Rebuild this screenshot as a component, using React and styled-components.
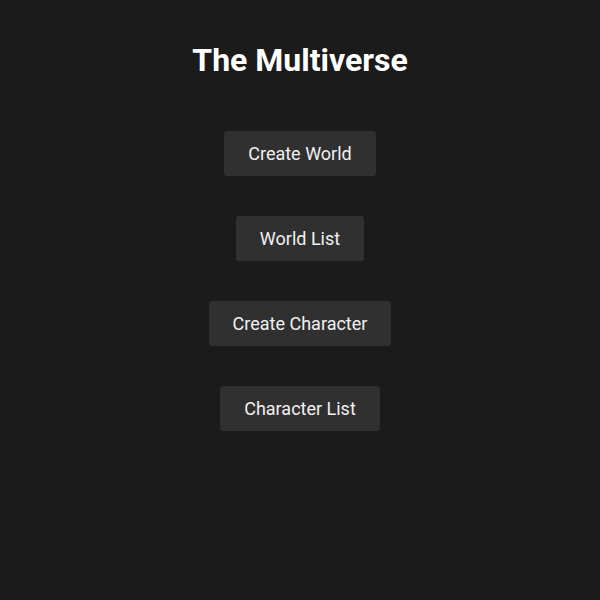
import React from 'react';
import styled, { createGlobalStyle } from 'styled-components';

const GlobalStyle = createGlobalStyle`
    html, body {
        margin: 0;
        padding: 0;
        background-color: #1b1b1b;
    }
    body {
        font-family: Roboto, "Liberation Sans", sans-serif;
        color: #f2f2f2;
    }
`

const Page = styled.div`
    display: flex;
    flex-direction: column;
    align-items: center;
    min-height: 600px;
    padding-top: 41px;
    box-sizing: border-box;
`

const Title = styled.h1`
    font-size: 32px;
    font-weight: 700;
    margin: 0 0 52px 0;
    color: #ffffff;
`

const Menu = styled.nav`
    display: flex;
    flex-direction: column;
    align-items: center;
    gap: 40px;
`

const MenuButton = styled.button`
    font-family: Roboto, "Liberation Sans", sans-serif;
    font-size: 18px;
    line-height: 21px;
    color: #f0f0f0;
    background-color: #303030;
    border: none;
    border-radius: 3px;
    padding: 12px 24px;
    cursor: pointer;
    &:hover{ background-color: #3a3a3a; }
`

export default function App(){
    const items = ['Create World', 'World List', 'Create Character', 'Character List'];

    return(
        <>
            <GlobalStyle />
            <Page>
                <Title>The Multiverse</Title>
                <Menu>
                    {items.map((label) => (
                        <MenuButton key={label}>{label}</MenuButton>
                    ))}
                </Menu>
            </Page>
        </>
    );
}
